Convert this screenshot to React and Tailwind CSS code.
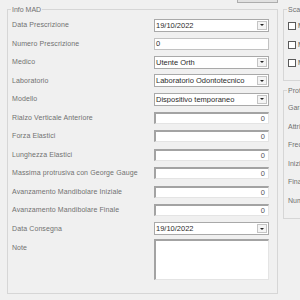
import React from 'react';

const rows = [
  { label: 'Data Prescrizione', kind: 'combo', value: '19/10/2022' },
  { label: 'Numero Prescrizione', kind: 'text', value: '0' },
  { label: 'Medico', kind: 'combo', value: 'Utente Orth' },
  { label: 'Laboratorio', kind: 'combo', value: 'Laboratorio Odontotecnico' },
  { label: 'Modello', kind: 'combo', value: 'Dispositivo temporaneo' },
  { label: 'Rialzo Verticale Anteriore', kind: 'num', value: '0' },
  { label: 'Forza Elastici', kind: 'num', value: '0' },
  { label: 'Lunghezza Elastici', kind: 'num', value: '0' },
  { label: 'Massima protrusiva con George Gauge', kind: 'num', value: '0' },
  { label: 'Avanzamento Mandibolare Iniziale', kind: 'num', value: '0' },
  { label: 'Avanzamento Mandibolare Finale', kind: 'num', value: '0' },
  { label: 'Data Consegna', kind: 'combo', value: '19/10/2022' },
];

const Combo = ({ value }) => (
  <div className="h-[13px] flex items-center border border-[#a9a9a9] bg-white">
    <span className="flex-1 pl-[1px] text-[7.5px] leading-none text-[#2b2b2b] whitespace-nowrap overflow-hidden">{value}</span>
    <span className="w-[10px] h-[9px] mr-[1px] flex items-center justify-center border border-[#c4c4c4] bg-[#f4f4f4]">
      <span className="w-0 h-0 border-x-[2px] border-x-transparent border-t-[2px] border-t-[#222]" />
    </span>
  </div>
);

const TextBox = ({ value }) => (
  <div className="h-[12px] flex items-center border border-[#c2c2c2] bg-white pl-[1px] text-[7.5px] leading-none text-[#2b2b2b]">
    {value}
  </div>
);

const NumBox = ({ value }) => (
  <div className="h-[12px] flex items-center justify-end border-t-2 border-l-2 border-t-[#a3a3a3] border-l-[#a3a3a3] border-r border-b border-r-[#e4e4e4] border-b-[#e4e4e4] bg-white pr-[3px] text-[7.5px] leading-none text-[#555]">
    {value}
  </div>
);

const Group = ({ title, className, children }) => (
  <div className={`relative shrink-0 border border-[#d6d6d6] ${className}`}>
    <span className="absolute -top-[5px] left-[3px] px-[1px] bg-[#f0f0f0] text-[7px] leading-[9px] text-[#707070] whitespace-nowrap">
      {title}
    </span>
    {children}
  </div>
);

export default function App() {
  return (
    <div className="w-[300px] h-[300px] overflow-hidden bg-[#f0f0f0] font-['Liberation_Sans',sans-serif]">
      <div className="h-[3px] pl-[237px]">
        <div className="w-[41px] h-[3px] border-x border-b border-[#adadad] bg-[#e1e1e1]" />
      </div>
      <div className="flex items-start gap-[5px] pl-[7px] pt-[6px]">
        <Group title="Info MAD" className="w-[271px] h-[285px] pt-[6px] pl-[4px] pr-[8px]">
          <div className="grid grid-cols-[142px_115px]">
            {rows.map((r) => (
              <React.Fragment key={r.label}>
                <div className="h-[18.5px] flex items-center text-[7px] tracking-[0.1px] text-[#707070] whitespace-nowrap">{r.label}</div>
                <div className="h-[18.5px] flex flex-col justify-center">
                  {r.kind === 'combo' && <Combo value={r.value} />}
                  {r.kind === 'text' && <TextBox value={r.value} />}
                  {r.kind === 'num' && <NumBox value={r.value} />}
                </div>
              </React.Fragment>
            ))}
            <div className="pt-[4px] mt-[1px] text-[7px] leading-[9px] text-[#707070]">Note</div>
            <div className="h-[41px] mt-[1px] border-t-2 border-l-2 border-t-[#a3a3a3] border-l-[#a3a3a3] border-r border-b border-r-[#e4e4e4] border-b-[#e4e4e4] bg-white" />
          </div>
        </Group>
        <div className="flex flex-col gap-[9px] w-[40px] shrink-0">
          <Group title="Scadenze" className="h-[72px] pt-[7px] pl-[4px] border-r-0">
            {['Mensile', 'Mensile', 'Mensile'].map((t, i) => (
              <div key={i} className="h-[18.5px] flex items-center gap-[2px]">
                <span className="w-[8px] h-[8px] shrink-0 border border-[#5a5a5a] bg-white" />
                <span className="text-[7px] text-[#555] whitespace-nowrap">{t}</span>
              </div>
            ))}
          </Group>
          <Group title="Protocollo" className="h-[129px] pt-[8px] pl-[4px] border-r-0">
            {['Garanzia', 'Attrito', 'Frequenza', 'Iniziale', 'Finale', 'Numero'].map((t) => (
              <div key={t} className="h-[18.5px] flex items-center text-[7px] text-[#707070] whitespace-nowrap">{t}</div>
            ))}
          </Group>
        </div>
      </div>
    </div>
  );
}
